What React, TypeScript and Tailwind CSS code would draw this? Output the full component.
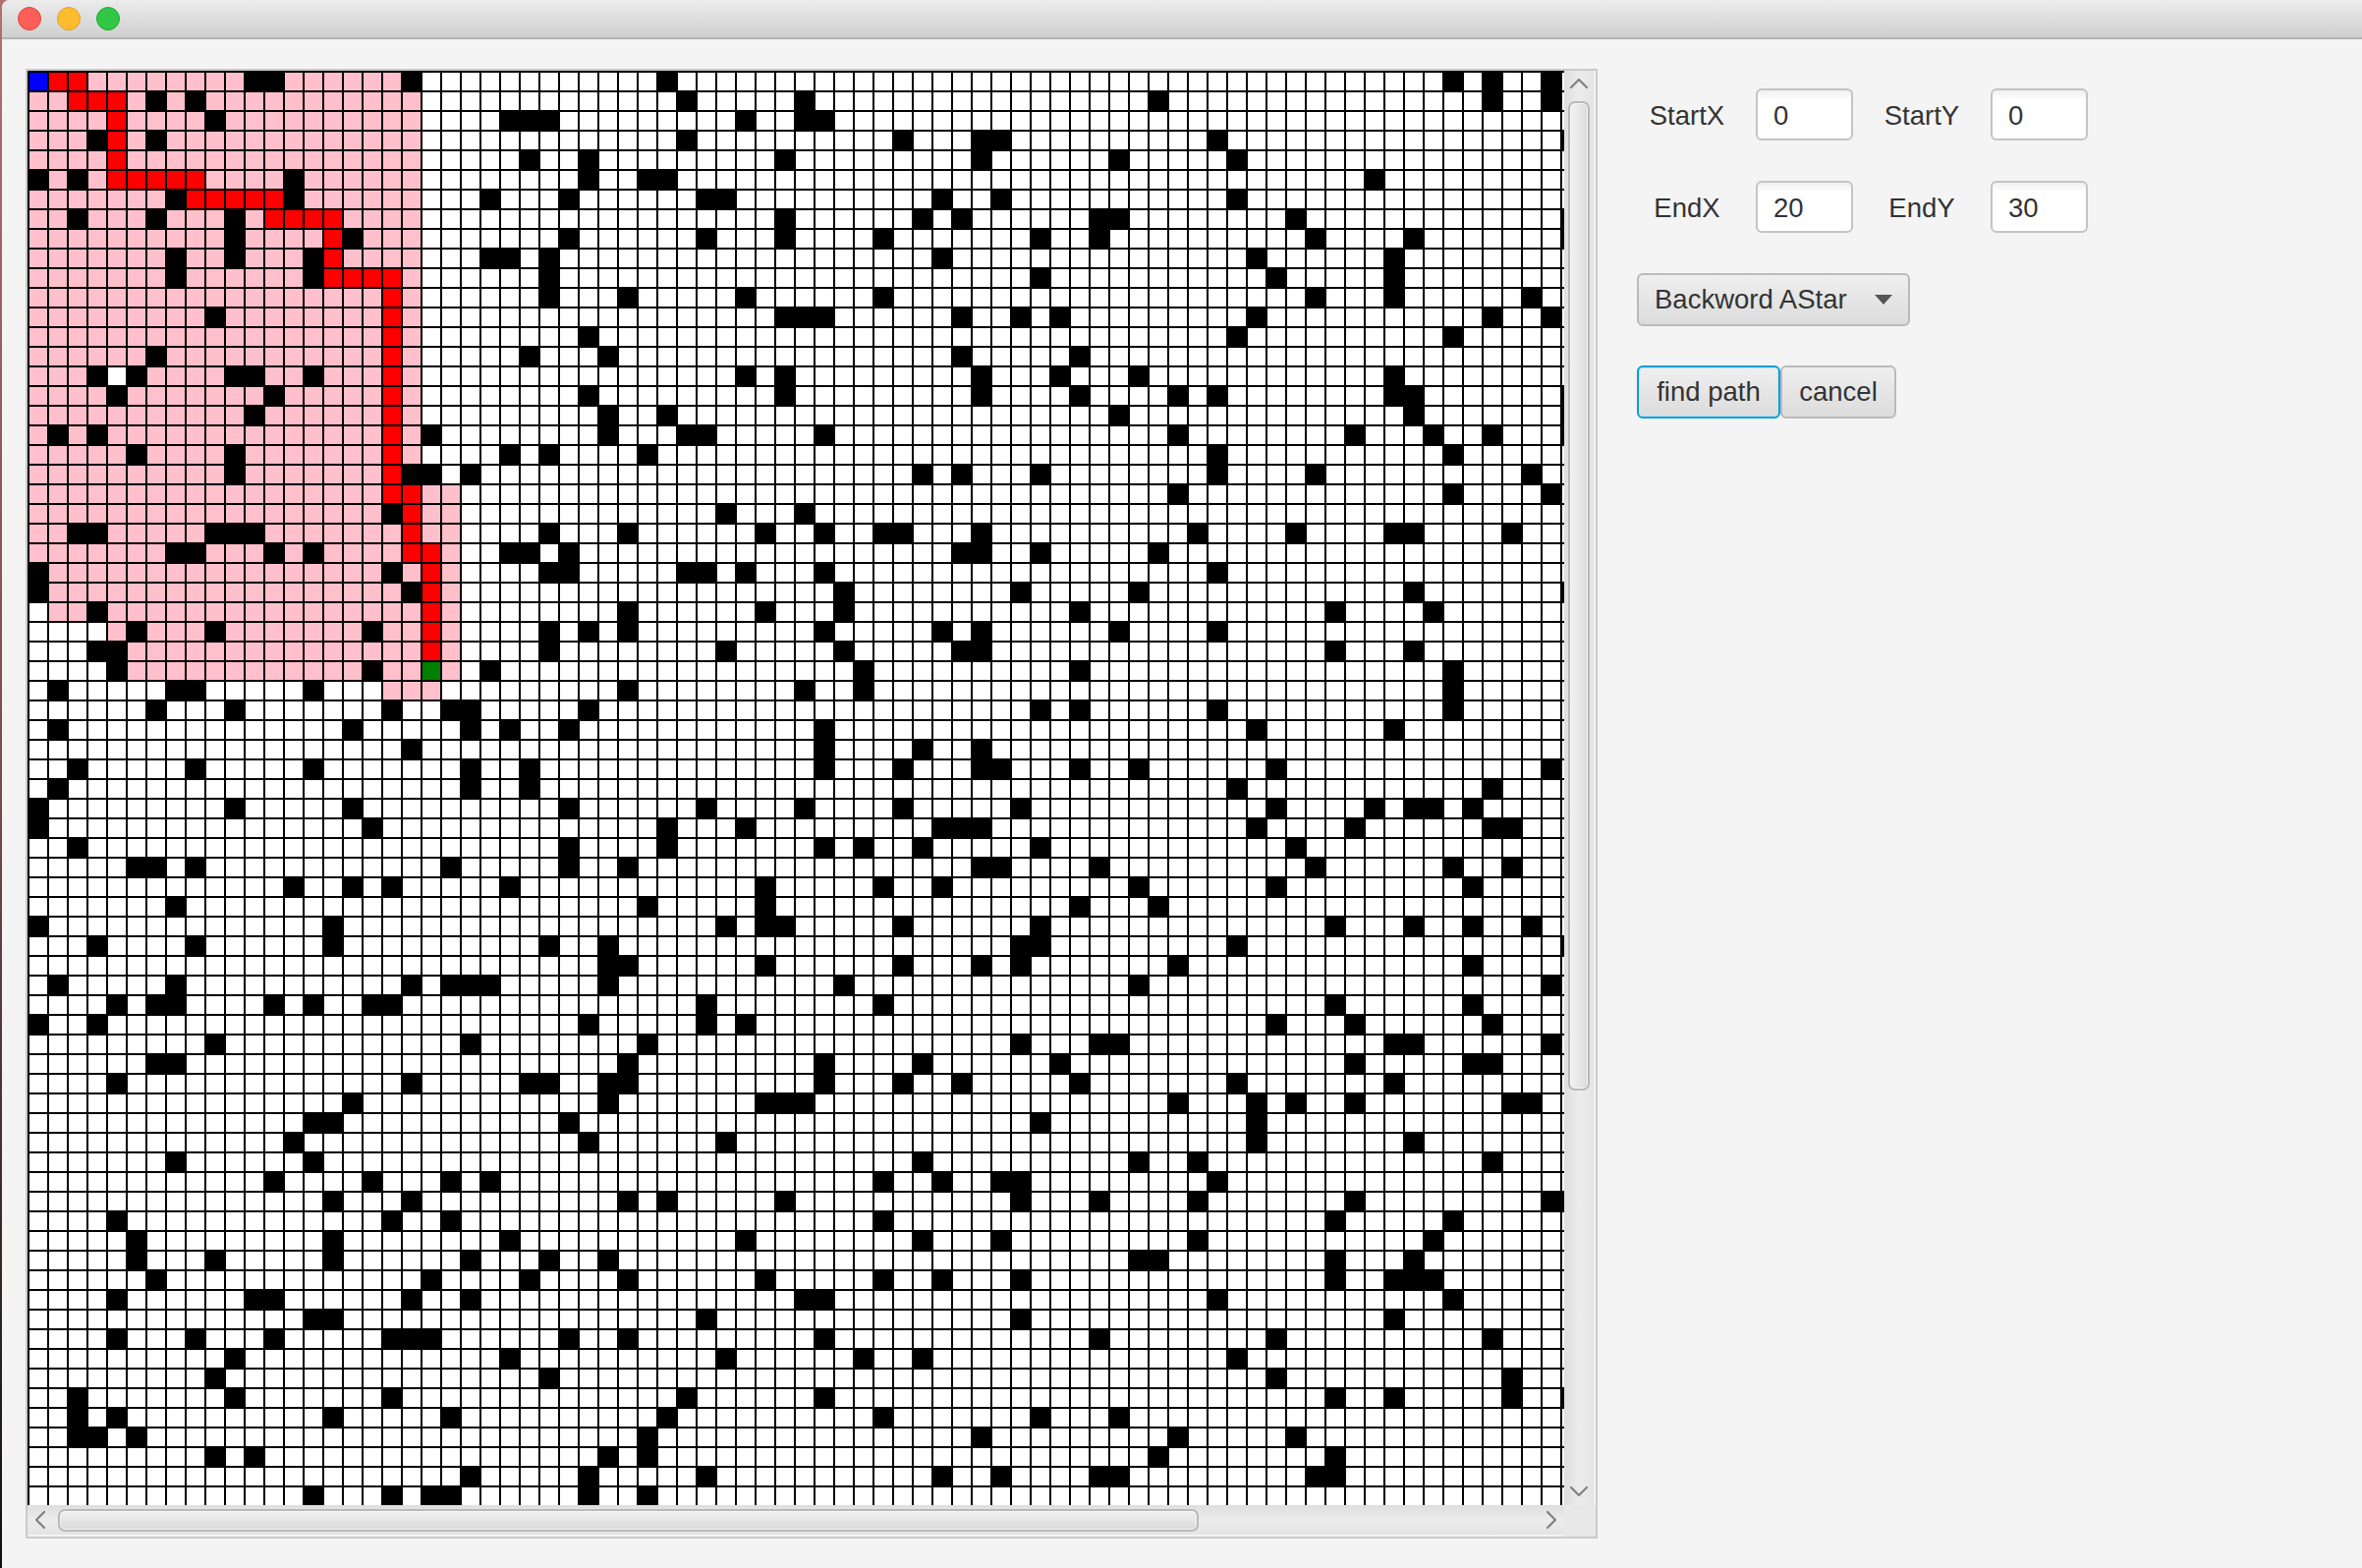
import { ChevronDown, ChevronLeft, ChevronRight, ChevronUp } from "lucide-react";

const COLS = 79;

// blocked cells per row, read off the map
const WALLS: number[][] = [
  [11, 12, 19, 32, 72, 74, 77],
  [6, 8, 33, 39, 57, 74, 77],
  [9, 24, 25, 26, 36, 39, 40],
  [3, 6, 33, 44, 48, 49, 60, 78],
  [25, 28, 38, 48, 55, 61],
  [0, 2, 13, 28, 31, 32, 68],
  [7, 13, 23, 27, 34, 35, 46, 49, 61],
  [2, 6, 10, 38, 45, 47, 54, 55, 64, 78],
  [10, 16, 27, 34, 38, 43, 51, 54, 65, 70, 78],
  [7, 10, 14, 23, 24, 26, 46, 62, 69],
  [7, 14, 26, 51, 63, 69],
  [26, 30, 36, 43, 65, 69, 76],
  [9, 38, 39, 40, 47, 50, 52, 62, 74, 77],
  [28, 61, 72],
  [6, 25, 29, 47, 53],
  [3, 5, 10, 11, 14, 36, 38, 48, 52, 56, 69],
  [4, 12, 28, 38, 48, 53, 58, 60, 69, 70, 78],
  [11, 29, 32, 55, 70, 78],
  [1, 3, 20, 29, 33, 34, 40, 58, 67, 71, 74, 78],
  [5, 10, 24, 26, 31, 60, 72],
  [10, 19, 20, 22, 45, 47, 51, 60, 65, 76],
  [58, 72, 77],
  [18, 35, 39],
  [2, 3, 9, 10, 11, 26, 30, 37, 40, 43, 44, 48, 59, 64, 69, 70, 75],
  [7, 8, 12, 14, 24, 25, 27, 47, 48, 51, 57],
  [0, 18, 26, 27, 33, 34, 36, 40, 60],
  [0, 19, 41, 50, 56, 70, 78],
  [3, 30, 37, 41, 53, 66, 71],
  [5, 9, 17, 26, 28, 30, 40, 46, 48, 55, 60],
  [3, 4, 26, 35, 41, 47, 48, 66, 70],
  [4, 17, 23, 42, 53, 72],
  [1, 7, 8, 14, 30, 39, 42, 72],
  [6, 10, 18, 21, 22, 28, 51, 53, 60, 72],
  [1, 16, 22, 24, 27, 40, 62, 69],
  [19, 40, 45, 48],
  [2, 8, 14, 22, 25, 40, 44, 48, 49, 53, 56, 63, 77],
  [1, 22, 25, 61, 74],
  [0, 10, 16, 27, 34, 39, 44, 50, 63, 68, 70, 71, 73],
  [0, 17, 32, 36, 46, 47, 48, 62, 67, 74, 75],
  [2, 27, 32, 40, 42, 45, 51, 64],
  [5, 6, 8, 21, 27, 30, 48, 49, 54, 65, 72, 75],
  [13, 16, 18, 24, 37, 43, 46, 56, 63, 73],
  [7, 31, 37, 53, 57],
  [0, 15, 35, 37, 38, 44, 51, 66, 70, 73, 76],
  [3, 8, 15, 26, 29, 50, 51, 61, 78],
  [29, 30, 37, 44, 48, 50, 58, 73],
  [1, 7, 19, 21, 22, 23, 29, 41, 56, 77],
  [4, 6, 7, 12, 14, 17, 18, 34, 43, 66, 73],
  [0, 3, 28, 34, 36, 63, 67, 74],
  [9, 22, 31, 50, 54, 55, 69, 70, 77],
  [6, 7, 30, 40, 45, 52, 67, 73, 74],
  [4, 19, 25, 26, 29, 30, 40, 44, 47, 53, 61, 69],
  [16, 29, 37, 38, 39, 58, 62, 64, 67, 75, 76],
  [14, 15, 27, 51, 62],
  [13, 28, 35, 62, 70],
  [7, 14, 45, 56, 59, 74],
  [12, 17, 21, 23, 43, 46, 49, 50, 60],
  [15, 19, 30, 32, 38, 50, 54, 59, 67, 77, 78],
  [4, 18, 21, 43, 66, 72],
  [5, 15, 24, 36, 45, 49, 59, 71],
  [5, 9, 15, 22, 26, 29, 56, 57, 66, 70],
  [6, 20, 25, 30, 37, 43, 46, 50, 66, 69, 70, 71],
  [4, 11, 12, 19, 22, 39, 40, 60, 72],
  [14, 15, 34, 50, 69],
  [4, 8, 12, 18, 19, 20, 27, 30, 40, 54, 63, 74],
  [10, 24, 35, 42, 45, 61],
  [9, 26, 63, 75],
  [2, 10, 18, 33, 40, 66, 69, 75, 78],
  [2, 4, 15, 21, 32, 43, 51, 55],
  [2, 3, 5, 31, 48, 58, 64],
  [9, 11, 29, 31, 57, 66],
  [22, 28, 34, 46, 49, 54, 55, 65, 66],
  [14, 18, 20, 21, 28, 31],
];

// explored area as [row, first col, last col]
const VISITED: [number, number, number][] = [
  ...Array.from({ length: 21 }, (_, r) => [r, 0, 19] as [number, number, number]),
  [21, 0, 21],
  [22, 0, 21],
  [23, 0, 21],
  [24, 0, 21],
  [25, 0, 21],
  [26, 0, 21],
  [27, 1, 21],
  [28, 4, 21],
  [29, 5, 21],
  [30, 5, 21],
  [31, 18, 20],
];

// found path as [row, first col, last col]
const PATH: [number, number, number][] = [
  [0, 1, 2],
  [1, 2, 4],
  [2, 4, 4],
  [3, 4, 4],
  [4, 4, 4],
  [5, 4, 8],
  [6, 8, 12],
  [7, 12, 15],
  [8, 15, 15],
  [9, 15, 15],
  [10, 15, 18],
  ...Array.from({ length: 10 }, (_, i) => [11 + i, 18, 18] as [number, number, number]),
  [21, 18, 19],
  [22, 19, 19],
  [23, 19, 19],
  [24, 19, 20],
  [25, 20, 20],
  [26, 20, 20],
  [27, 20, 20],
  [28, 20, 20],
  [29, 20, 20],
];

function inSpans(spans: [number, number, number][], r: number, c: number) {
  return spans.some(([row, a, b]) => row === r && c >= a && c <= b);
}

function cellClass(r: number, c: number) {
  if (r === 0 && c === 0) return "bg-[#0000ff]";
  if (r === 30 && c === 20) return "bg-[#008000]";
  if (WALLS[r].includes(c)) return "bg-black";
  if (inSpans(PATH, r, c)) return "bg-[#ff0000]";
  if (r === 15 && c === 4) return "bg-white";
  if (inSpans(VISITED, r, c)) return "bg-[#ffc0cb]";
  return "bg-white";
}

function Board() {
  return (
    <div className="grid h-[1460px] w-[1564px] grid-cols-[repeat(79,18px)] grid-rows-[repeat(73,18px)] gap-[2px] overflow-hidden bg-black pl-[2px] pt-[2px]">
      {WALLS.map((_, r) =>
        Array.from({ length: COLS }, (_, c) => (
          <div key={`${r}-${c}`} className={cellClass(r, c)} />
        )),
      )}
    </div>
  );
}

const thumb =
  "rounded-[7px] border-2 border-[#b9b9b9] shadow-[inset_0_0_0_1px_#f6f6f6]";

function VScrollBar() {
  return (
    <div className="flex h-[1460px] w-[30px] flex-col items-center overflow-hidden bg-gradient-to-r from-[#dedede] via-[#ececec] to-[#e4e4e4]">
      <ChevronUp className="-mt-[3px] h-[32px] w-[32px] shrink-0 text-[#808080]" strokeWidth={1.6} />
      <div className={`mt-[2px] h-[1007px] w-[22px] shrink-0 bg-gradient-to-r from-[#f2f2f2] to-[#dcdcdc] ${thumb}`} />
      <div className="flex-1" />
      <ChevronDown className="-mb-[2px] h-[32px] w-[32px] shrink-0 text-[#808080]" strokeWidth={1.6} />
    </div>
  );
}

function HScrollBar() {
  return (
    <div className="flex h-[30px] w-[1564px] items-center overflow-hidden bg-gradient-to-b from-[#dedede] via-[#ececec] to-[#e4e4e4]">
      <ChevronLeft className="-ml-[3px] h-[32px] w-[32px] shrink-0 text-[#808080]" strokeWidth={1.6} />
      <div className={`ml-[2px] h-[23px] w-[1161px] shrink-0 bg-gradient-to-b from-[#f2f2f2] to-[#d8d8d8] ${thumb}`} />
      <div className="flex-1" />
      <ChevronRight className="-mr-[3px] h-[32px] w-[32px] shrink-0 text-[#808080]" strokeWidth={1.6} />
    </div>
  );
}

function Field({ label, value }: { label: string; value: string }) {
  return (
    <>
      <span className="w-[102px] pt-[2px] text-center">{label}</span>
      <div className="flex h-[53px] w-[99px] items-center rounded-[6px] border-2 border-[#c4c4c4] bg-gradient-to-b from-[#f0f0f0] to-white to-[20%] pl-[16px] pt-[2px]">
        {value}
      </div>
    </>
  );
}

const buttonBase =
  "flex h-[54px] items-center rounded-[6px] border-2 bg-gradient-to-b from-[#efefef] to-[#dcdcdc]";

export default function App() {
  return (
    <div className="flex h-[1596px] w-[2404px] overflow-hidden bg-gradient-to-b from-[#b07070] via-[#7a4a4a] to-[#111111] font-['Liberation_Sans',Arial,sans-serif] text-[27.5px] text-[#333333]">
      <div className="ml-[2px] flex flex-1 flex-col overflow-hidden rounded-tl-[8px] bg-[#f4f4f4]">
        <div className="flex h-[40px] shrink-0 items-center gap-[16px] border-b-2 border-[#b4b4b4] bg-gradient-to-b from-[#ececec] to-[#cfcfcf] pl-[16px]">
          <div className="h-[24px] w-[24px] rounded-full border border-[#e0443e] bg-[#fc5f57]" />
          <div className="h-[24px] w-[24px] rounded-full border border-[#dea123] bg-[#fdbc2e]" />
          <div className="h-[24px] w-[24px] rounded-full border border-[#1aab29] bg-[#33c748]" />
        </div>

        <div className="flex flex-1 pl-[24px] pt-[30px]">
          <div className="flex h-[1496px] w-[1600px] shrink-0 flex-col self-start border-2 border-[#cacaca]">
            <div className="flex">
              <Board />
              <VScrollBar />
            </div>
            <div className="flex flex-1">
              <HScrollBar />
              <div className="flex-1 bg-[#e8e8e8]" />
            </div>
          </div>

          <div className="ml-[40px] flex flex-col pt-[20px]">
            <div className="flex items-center gap-[19px]">
              <Field label="StartX" value="0" />
              <Field label="StartY" value="0" />
            </div>
            <div className="mt-[41px] flex items-center gap-[19px]">
              <Field label="EndX" value="20" />
              <Field label="EndY" value="30" />
            </div>
            <div className={`mt-[41px] w-[278px] justify-between border-[#bababa] pl-[16px] pr-[16px] ${buttonBase}`}>
              <span>Backword AStar</span>
              <div className="h-0 w-0 border-x-[9px] border-t-[10px] border-x-transparent border-t-[#555555]" />
            </div>
            <div className="mt-[40px] flex">
              <div className={`w-[146px] justify-center border-[#0a9fd8] shadow-[inset_0_0_0_1px_#c4e2ef] ${buttonBase}`}>find path</div>
              <div className={`w-[118px] justify-center border-[#bababa] ${buttonBase}`}>cancel</div>
            </div>
          </div>
        </div>
      </div>
    </div>
  );
}
